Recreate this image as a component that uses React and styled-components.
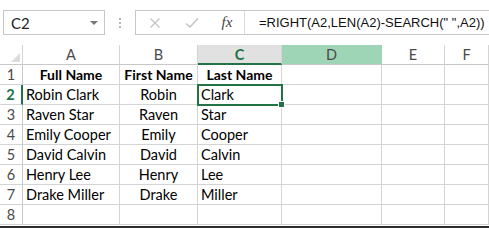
import React from 'react'
import styled, { createGlobalStyle, css } from 'styled-components'

const GlobalStyle = createGlobalStyle`
  html, body {
    margin: 0;
    padding: 0;
    background: #fff;
    overflow: hidden;
  }
`;

const COLUMNS = ['A', 'B', 'C', 'D', 'E', 'F']

const ROWS = [
    ['Full Name', 'First Name', 'Last Name'],
    ['Robin Clark', 'Robin', 'Clark'],
    ['Raven Star', 'Raven', 'Star'],
    ['Emily Cooper', 'Emily', 'Cooper'],
    ['David Calvin', 'David', 'Calvin'],
    ['Henry Lee', 'Henry', 'Lee'],
    ['Drake Miller', 'Drake', 'Miller'],
    ['', '', ''],
]

// alignment per data column: A left, B centred, C left
const ALIGN = ['left', 'center', 'left']

function App() {
    return (
        <Window>
            <GlobalStyle />

            <FormulaBar>
                <NameBox>
                    <span>C2</span>
                    <DropArrow />
                </NameBox>

                <Grip>
                    <i /><i /><i />
                </Grip>

                <FormulaBox>
                    <IconArea>
                        <IconSlot>
                            <svg width="12" height="12" viewBox="0 0 12 12">
                                <path d="M1.5 1.5 L10.5 10.5 M10.5 1.5 L1.5 10.5" stroke="#c4c4c4" strokeWidth="1.3" fill="none" />
                            </svg>
                        </IconSlot>
                        <IconSlot>
                            <svg width="14" height="12" viewBox="0 0 14 12">
                                <path d="M1 6.5 L5 10 L13 1.5" stroke="#c4c4c4" strokeWidth="1.5" fill="none" />
                            </svg>
                        </IconSlot>
                        <Fx>fx</Fx>
                    </IconArea>
                    <FormulaText>=RIGHT(A2,LEN(A2)-SEARCH(" ",A2))</FormulaText>
                </FormulaBox>
            </FormulaBar>

            <Sheet>
                <Corner>
                    <svg width="9" height="9" viewBox="0 0 9 9">
                        <polygon points="9,0 9,9 0,9" fill="#dcdcdc" />
                    </svg>
                </Corner>

                {COLUMNS.map((col) => (
                    <ColHeader key={col} state={col === 'C' ? 'active' : col === 'D' ? 'hover' : ''}>
                        {col}
                    </ColHeader>
                ))}

                {ROWS.map((row, i) => {
                    const rowNum = i + 1
                    return (
                        <React.Fragment key={rowNum}>
                            <RowHeader active={rowNum === 2}>{rowNum}</RowHeader>
                            {row.map((value, c) => (
                                <Cell
                                    key={c}
                                    align={rowNum === 1 ? 'center' : ALIGN[c]}
                                    bold={rowNum === 1}
                                    selected={rowNum === 2 && c === 2}
                                >
                                    {value}
                                </Cell>
                            ))}
                            <Cell />
                            <Cell />
                            <Cell />
                        </React.Fragment>
                    )
                })}
            </Sheet>

            <BottomEdge />
        </Window>
    )
}

const Window = styled.div`
    width: 489px;
    height: 228px;
    display: flex;
    flex-direction: column;
    font-family: Lato, "Liberation Sans", sans-serif;
    overflow: hidden;
`;

const FormulaBar = styled.div`
    height: 45px;
    box-sizing: border-box;
    padding: 10px 0 0 3px;
    display: flex;
    align-items: flex-start;
`;

const NameBox = styled.div`
    width: 102px;
    height: 25px;
    box-sizing: border-box;
    border: 1px solid #c6c6c6;
    display: flex;
    align-items: center;
    justify-content: space-between;
    padding: 0 6px 0 7px;
    font-size: 15px;
    color: #222;
`;

const DropArrow = styled.span`
    width: 0;
    height: 0;
    border-left: 4px solid transparent;
    border-right: 4px solid transparent;
    border-top: 4px solid #777;
`;

const Grip = styled.div`
    width: 30px;
    height: 25px;
    display: flex;
    flex-direction: column;
    align-items: center;
    justify-content: center;
    gap: 2px;

    i {
        width: 2px;
        height: 2px;
        background: #b5b5b5;
    }
`;

const FormulaBox = styled.div`
    flex: 1;
    height: 25px;
    box-sizing: border-box;
    border: 1px solid #c6c6c6;
    border-right: none;
    display: flex;
    align-items: center;
`;

const IconArea = styled.div`
    width: 108px;
    height: 100%;
    display: grid;
    grid-template-columns: 38px 36px 1fr;
    align-items: center;
    justify-items: center;
`;

const IconSlot = styled.span`
    display: flex;
    align-items: center;
    justify-content: center;
`;

const Fx = styled.span`
    font-family: "Liberation Serif", serif;
    font-style: italic;
    font-size: 15px;
    color: #444;
`;

const FormulaText = styled.div`
    flex: 1;
    height: 100%;
    border-left: 1px solid #dadada;
    display: flex;
    align-items: center;
    padding-left: 14px;
    font-family: "Liberation Sans", sans-serif;
    font-size: 13px;
    color: #111;
    white-space: nowrap;
`;

const Sheet = styled.div`
    display: grid;
    grid-template-columns: 23px 97px 78px 84px 100px 63px 44px;
    grid-auto-rows: 20px;
`;

const headerBase = css`
    box-sizing: border-box;
    display: flex;
    align-items: center;
    justify-content: center;
    font-size: 14.5px;
    color: #4a4a4a;
    background: #fff;
`;

const Corner = styled.div`
    ${headerBase};
    align-items: flex-end;
    justify-content: flex-end;
    padding: 0 2px 2px 0;
    border-right: 1px solid #d4d4d4;
    border-bottom: 1px solid #c8c8c8;
`;

const ColHeader = styled.div`
    ${headerBase};
    border-right: 1px solid #d4d4d4;
    border-bottom: 1px solid #c8c8c8;

    ${(p) => p.state === 'active' && css`
        background: #e1e1e1;
        color: #217346;
        font-weight: bold;
        border-bottom: 2px solid #217346;
    `}

    ${(p) => p.state === 'hover' && css`
        background: #9fd5b7;
        border-right-color: #9fd5b7;
    `}
`;

const RowHeader = styled.div`
    ${headerBase};
    border-right: 1px solid #c8c8c8;
    border-bottom: 1px solid #d4d4d4;

    ${(p) => p.active && css`
        color: #217346;
        font-weight: bold;
        border-right: 2px solid #217346;
    `}
`;

const Cell = styled.div`
    position: relative;
    box-sizing: border-box;
    border-right: 1px solid #d4d4d4;
    border-bottom: 1px solid #d4d4d4;
    display: flex;
    align-items: center;
    justify-content: ${(p) => (p.align === 'center' ? 'center' : 'flex-start')};
    padding-left: ${(p) => (p.align === 'center' ? '0' : '3px')};
    font-size: ${(p) => (p.bold ? '14px' : '14.5px')};
    font-weight: ${(p) => (p.bold ? 'bold' : 'normal')};
    color: #000;
    white-space: nowrap;

    ${(p) => p.selected && css`
        outline: 2px solid #217346;
        outline-offset: -1px;
        z-index: 1;

        &::after {
            content: '';
            position: absolute;
            right: -4px;
            bottom: -4px;
            width: 5px;
            height: 5px;
            background: #217346;
            border: 1px solid #fff;
        }
    `}
`;

const BottomEdge = styled.div`
    margin-top: 1px;
    height: 2px;
    background: #2d2d2d;
`;

export default App
